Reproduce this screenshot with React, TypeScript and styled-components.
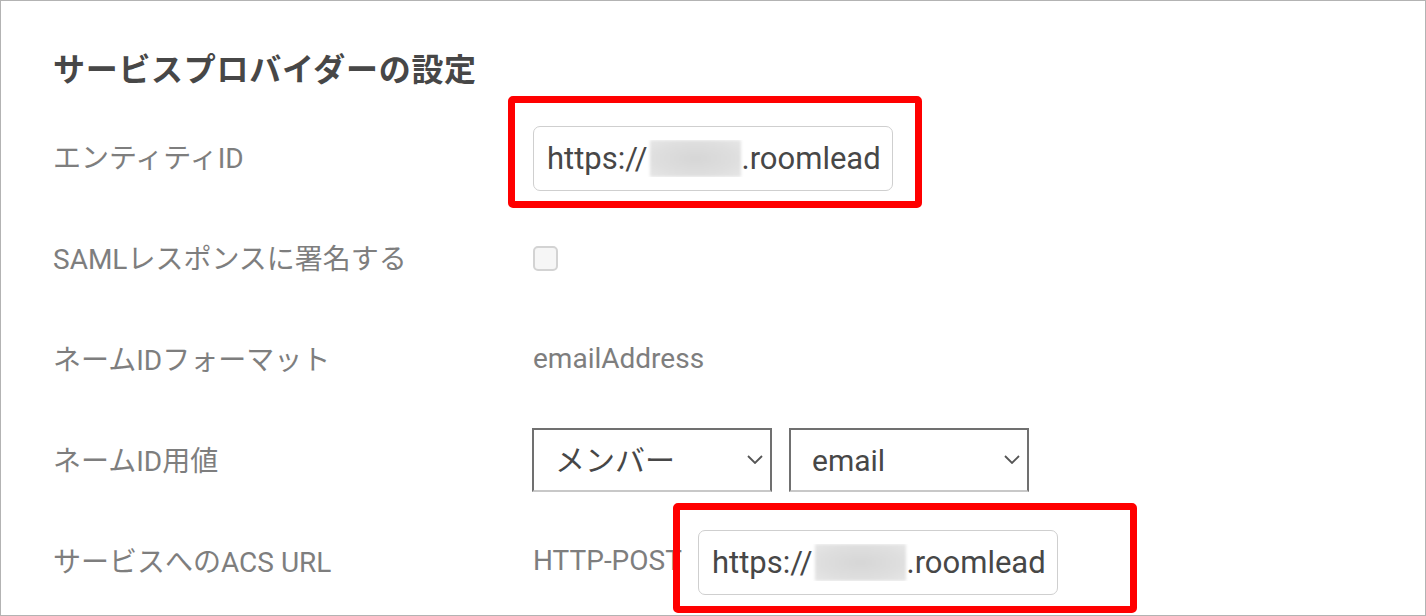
import React from "react";
import styled, { createGlobalStyle } from "styled-components";

const GlobalStyle = createGlobalStyle`
  html, body {
    margin: 0;
    padding: 0;
    background: #ffffff;
  }
  body {
    font-family: Roboto, "Noto Sans CJK JP", "Noto Sans", sans-serif;
  }
  * { box-sizing: border-box; }
`;

const Frame = styled.div`
  width: 1426px;
  height: 616px;
  border: 1px solid #b3b3b3;
  background: #ffffff;
  padding-left: 52px;
  overflow: hidden;
`;

const Title = styled.h1`
  margin: 0;
  height: 107px;
  padding-top: 25px;
  display: flex;
  align-items: center;
  font-size: 32px;
  font-weight: 700;
  letter-spacing: 0.7px;
  color: #474747;
  font-family: "Noto Sans CJK JP", sans-serif;
`;

const Form = styled.div`
  display: grid;
  grid-template-columns: 480px 1fr;
  grid-auto-rows: 101px;
  align-items: center;
`;

const Label = styled.div`
  font-size: 28px;
  color: #7e7e7e;
  white-space: nowrap;
  padding-bottom: 5px;
`;

const Cell = styled.div`
  display: flex;
  align-items: center;
  gap: 17px;
`;

const ValueText = styled.span<{ $width?: number }>`
  font-size: 28px;
  color: #7e7e7e;
  white-space: nowrap;
  flex-shrink: 0;
  padding-bottom: 4px;
  width: ${(p) => (p.$width ? `${p.$width}px` : "auto")};
`;

const FieldWrap = styled.div`
  position: relative;
  flex-shrink: 0;
`;

const Annotation = styled.div<{ $t: number; $r: number; $b: number; $l: number }>`
  position: absolute;
  top: ${(p) => -p.$t}px;
  right: ${(p) => -p.$r}px;
  bottom: ${(p) => -p.$b}px;
  left: ${(p) => -p.$l}px;
  border: 7px solid #ff0000;
  border-radius: 5px;
  pointer-events: none;
`;

const TextField = styled.div`
  width: 360px;
  height: 65px;
  border: 1.5px solid #cfcfcf;
  border-radius: 7px;
  padding: 0 10px 0 13px;
  display: flex;
  align-items: center;
  background: #ffffff;
`;

const FieldText = styled.div`
  width: 100%;
  overflow: hidden;
  white-space: nowrap;
  font-size: 31px;
  color: #474747;
  line-height: 1;
  display: flex;
  align-items: center;
`;

const Blur = styled.span`
  display: inline-block;
  flex-shrink: 0;
  width: 91px;
  height: 37px;
  margin-left: 3px;
  background: radial-gradient(ellipse at 50% 50%, #d6d6d6 0%, #dedede 60%, #e6e6e6 100%);
  filter: blur(1.5px);
`;

const Checkbox = styled.input`
  appearance: none;
  -webkit-appearance: none;
  margin: 0 0 2px 0;
  width: 25px;
  height: 25px;
  border: 2px solid #d3d3d3;
  border-radius: 5px;
  background: #f6f6f6;
`;

const SelectWrap = styled.div`
  position: relative;
  width: 240px;
  height: 64px;
`;

const Select = styled.select`
  appearance: none;
  -webkit-appearance: none;
  width: 100%;
  height: 100%;
  margin: 0;
  border: 2px solid #707070;
  border-bottom-color: #c8c8c8;
  border-radius: 0;
  background: #ffffff;
  padding: 0 40px 0 21px;
  font-family: Roboto, "Noto Sans CJK JP", sans-serif;
  font-size: 30px;
  color: #474747;
  outline: none;
`;

const Chevron = styled.svg`
  position: absolute;
  right: 9px;
  top: 50%;
  margin-top: -5px;
  width: 16px;
  height: 9px;
  pointer-events: none;
`;

const SelectGroup = styled.div`
  display: flex;
  gap: 17px;
  margin-left: -1px;
  margin-bottom: 3px;
`;

function UrlField({ box }: { box: [number, number, number, number] }) {
  return (
    <FieldWrap>
      <TextField>
        <FieldText>
          <span>https://</span>
          <Blur />
          <span>.roomlead</span>
        </FieldText>
      </TextField>
      <Annotation $t={box[0]} $r={box[1]} $b={box[2]} $l={box[3]} />
    </FieldWrap>
  );
}

function Dropdown({ value, options }: { value: string; options: string[] }) {
  return (
    <SelectWrap>
      <Select defaultValue={value}>
        {options.map((o) => (
          <option key={o} value={o}>
            {o}
          </option>
        ))}
      </Select>
      <Chevron viewBox="0 0 16 9" fill="none">
        <path d="M1 1 L8 8 L15 1" stroke="#555555" strokeWidth="1.8" />
      </Chevron>
    </SelectWrap>
  );
}

export default function App() {
  return (
    <>
      <GlobalStyle />
      <Frame>
        <Title>サービスプロバイダーの設定</Title>
        <Form>
          <Label>エンティティID</Label>
          <Cell>
            <UrlField box={[30, 29, 17, 25]} />
          </Cell>

          <Label>SAMLレスポンスに署名する</Label>
          <Cell>
            <Checkbox type="checkbox" />
          </Cell>

          <Label>ネームIDフォーマット</Label>
          <Cell>
            <ValueText>emailAddress</ValueText>
          </Cell>

          <Label>ネームID用値</Label>
          <Cell>
            <SelectGroup>
              <Dropdown value="メンバー" options={["メンバー", "ゲスト"]} />
              <Dropdown value="email" options={["email", "id", "name"]} />
            </SelectGroup>
          </Cell>

          <Label>サービスへのACS URL</Label>
          <Cell>
            <ValueText $width={148}>HTTP-POST</ValueText>
            <UrlField box={[27, 79, 18, 25]} />
          </Cell>
        </Form>
      </Frame>
    </>
  );
}
